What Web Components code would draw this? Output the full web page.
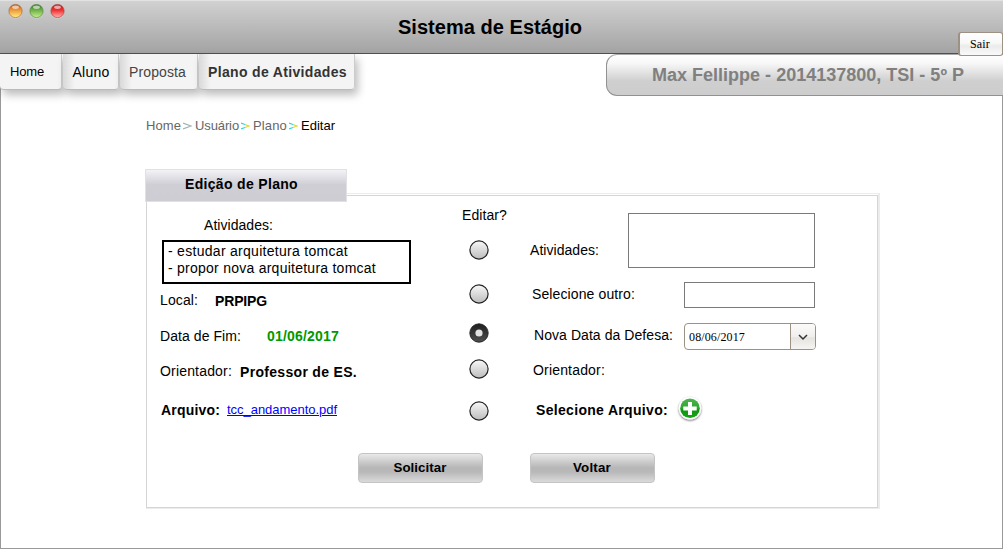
<!DOCTYPE html>
<html lang="pt-BR">
<head>
<meta charset="utf-8">
<title>Sistema de Estágio</title>
<style>
html,body{margin:0;background:#fff;font:14px/16px "Liberation Sans",Arial,sans-serif;color:#000;overflow:hidden}
</style>
</head>
<body>
<estagio-app></estagio-app>
<script>
const define = (name, html, ready) => customElements.define(name, class extends HTMLElement {
  constructor() {
    super();
    const t = document.createElement('template');
    t.innerHTML = html;
    this.attachShadow({mode: 'open'}).append(t.content.cloneNode(true));
  }
  connectedCallback() { if (ready) ready.call(this); }
});

/* One line of text; w is the width its letters are spaced out to. */
define('fit-text', `<style>
:host{display:block;flex:none;white-space:nowrap;line-height:16px}
span{display:inline-block;white-space:pre}
:host([link]) span{text-decoration:underline}
</style><span><slot></slot></span>`, function () {
  const w = +this.getAttribute('w'), span = this.shadowRoot.querySelector('span');
  if (!w) return;
  const text = this.shadowRoot.querySelector('slot').assignedNodes({flatten: true}).map(n => n.textContent).join('');
  const natural = span.getBoundingClientRect().width;
  if (text.length) span.style.letterSpacing = (w - natural) / text.length + 'px';
  this.style.width = w + 'px';
});

define('window-header', `<style>
:host{display:flex;box-sizing:border-box;height:54px;position:relative;border-top:1px solid #e2e2e2;border-bottom:1px solid #505050;background:linear-gradient(#d1d1d1,#a3a3a3)}
.lights{display:flex;gap:6px;padding:2px 0 0 8px;width:390px;height:16px}
svg{width:15px;height:16px}
fit-text{margin-top:15px;font:bold 20px/23px "Liberation Sans",Arial,sans-serif}
</style>
<div class="lights">
<svg viewBox="0 0 14 16"><defs><linearGradient id="a" x2="0" y2="1"><stop stop-color="#b95a2c"/><stop offset=".45" stop-color="#ef9b3c"/><stop offset="1" stop-color="#ffef85"/></linearGradient></defs><circle cx="7" cy="8.6" r="6.8" fill="#fff" opacity=".5"/><circle cx="7" cy="8" r="6.6" fill="url(#a)" stroke="#a0663a" stroke-width=".7"/><ellipse cx="7" cy="4.2" rx="3.4" ry="1.7" fill="#fff" opacity=".6"/></svg>
<svg viewBox="0 0 14 16"><defs><linearGradient id="b" x2="0" y2="1"><stop stop-color="#3f7430"/><stop offset=".45" stop-color="#70b34a"/><stop offset="1" stop-color="#c9f090"/></linearGradient></defs><circle cx="7" cy="8.6" r="6.8" fill="#fff" opacity=".5"/><circle cx="7" cy="8" r="6.6" fill="url(#b)" stroke="#55823f" stroke-width=".7"/><ellipse cx="7" cy="4.2" rx="3.4" ry="1.7" fill="#fff" opacity=".6"/></svg>
<svg viewBox="0 0 14 16"><defs><linearGradient id="c" x2="0" y2="1"><stop stop-color="#a81e20"/><stop offset=".45" stop-color="#ef3434"/><stop offset="1" stop-color="#ffb4b0"/></linearGradient></defs><circle cx="7" cy="8.6" r="6.8" fill="#fff" opacity=".5"/><circle cx="7" cy="8" r="6.6" fill="url(#c)" stroke="#a83c3a" stroke-width=".7"/><ellipse cx="7" cy="4.2" rx="3.4" ry="1.7" fill="#fff" opacity=".6"/></svg>
</div>
<fit-text w="184">Sistema de Estágio</fit-text>
<slot></slot>`);

define('exit-button', `<style>
:host{display:block;box-sizing:border-box;position:absolute;z-index:2;right:0;top:31px;width:45px;height:24px;border:1px solid #9d9184;border-left-width:2px;border-radius:3px;background:linear-gradient(#fff,#f8f8f8 45%,#ebebeb 60%,#fafafa);padding:3px 0 0 10px}
fit-text{font:12px/16px "Liberation Serif","Times New Roman",serif}
</style><fit-text w="20"><slot></slot></fit-text>`);

define('nav-tab', `<style>
:host{display:block;box-sizing:border-box;height:36px;padding-top:10px;background:linear-gradient(90deg,#d9d9d9,#f4f4f4 12px);border-radius:0 0 4px 4px;border-right:1px solid #ccc;border-bottom:1px solid #bbb;box-shadow:3px 5px 8px rgba(0,0,0,.26)}
:host([first]){background:#f4f4f4}
</style><slot></slot>`);

define('user-badge', `<style>
:host{display:block;box-sizing:border-box;margin-left:auto;width:397px;height:42px;border:1px solid #929292;border-top-color:#aaa;border-right:0;border-radius:11px 0 0 11px;background:linear-gradient(#fff,#f8f8f8 20%,#cfcfcf 65%,#cdcdcd);padding:10px 0 0 45px;color:#808080}
fit-text{font:bold 18px/21px "Liberation Sans",Arial,sans-serif}
</style><fit-text w="312"><slot></slot></fit-text>`);

define('bread-crumb', `<style>
:host{display:flex;font-size:13px;color:#666;margin:63px 0 0 146px;height:16px}
svg{width:9px;height:8px;margin:4px 3px 0 2px;fill:none;stroke-width:1.3}
</style>
<fit-text w="35">Home</fit-text>
<svg viewBox="0 0 9 8"><path d="M0 1l8 3-8 3" stroke="#a4b2b2"/></svg>
<fit-text w="44">Usuário</fit-text>
<svg viewBox="0 0 9 8"><path d="M0 1l4 1.5M0 7l4-1.5" stroke="#2ed6e6"/><path d="M4 2.5l4 1.5-4 1.5" stroke="#dcd92c"/></svg>
<fit-text w="34">Plano</fit-text>
<svg viewBox="0 0 9 8"><path d="M0 1l4 1.5M0 7l4-1.5" stroke="#2ed6e6"/><path d="M4 2.5l4 1.5-4 1.5" stroke="#dcd92c"/></svg>
<fit-text w="34" style="color:#000">Editar</fit-text>`);

define('radio-dot', `<style>
:host{display:block;height:20px;width:20px}svg{display:block}.on{display:none}:host([checked]) .on{display:block}:host([checked]) .off{display:none}
</style><svg width="20" height="20" viewBox="0 0 20 20"><defs><linearGradient id="g" x2="0" y2="1"><stop stop-color="#f8f8f8"/><stop offset="1" stop-color="#bcbcbc"/></linearGradient><linearGradient id="d" x2="0" y2="1"><stop stop-color="#1e1e1e"/><stop offset="1" stop-color="#505050"/></linearGradient></defs>
<circle class="off" cx="10" cy="10" r="9.1" fill="url(#g)" stroke="#222" stroke-width="1.2"/>
<g class="on"><circle cx="10" cy="10" r="9.2" fill="url(#d)" stroke="#222" stroke-width=".9"/><circle cx="10" cy="10" r="3.6" fill="#e2e2e2"/></g></svg>`);

define('text-box', `<style>:host{display:block;box-sizing:border-box;border:1px solid #7a7a7a;background:#fff}</style>`);

define('date-combo', `<style>
:host{display:flex;box-sizing:border-box;width:132px;height:27px;border:1px solid #9d9184;border-radius:4px;background:#fff;overflow:hidden}
fit-text{font:12px/16px "Liberation Serif","Times New Roman",serif;margin:5px 0 0 4px}
i{margin-left:auto;width:24px;border-left:1px solid #9d9184;background:linear-gradient(#fbfbfa,#f1efed 50%,#e6e3df 55%,#f5f4f2)}
svg{display:block;margin:10px 0 0 7px}
</style><fit-text w="56"><slot></slot></fit-text><i><svg width="10" height="7" viewBox="0 0 10 7"><path d="M1 1l4 4 4-4" fill="none" stroke="#333" stroke-width="1.5"/></svg></i>`);

define('add-button', `<style>:host{display:block;width:28px;height:28px}svg{display:block}</style>
<svg width="28" height="28" viewBox="0 0 28 28"><defs><linearGradient id="p" x2="0" y2="1"><stop stop-color="#4cb54c"/><stop offset=".5" stop-color="#2fa52f"/><stop offset=".55" stop-color="#119411"/><stop offset="1" stop-color="#15a515"/></linearGradient><filter id="s" x="-20%" y="-20%" width="150%" height="150%"><feDropShadow dx="0" dy="1" stdDeviation="1" flood-opacity=".6"/></filter></defs>
<circle cx="14" cy="13.3" r="11.2" fill="#fff" filter="url(#s)"/><circle cx="14" cy="13.3" r="9.8" fill="url(#p)"/><path d="M12 7h4v4.5h4.7v4H16V20h-4v-4.5H7.3v-4H12z" fill="#fff"/></svg>`);

define('push-button', `<style>
:host{display:flex;justify-content:center;box-sizing:border-box;width:125px;height:30px;border:1px solid #c4c4c4;border-radius:4px;background:linear-gradient(#e9e9e9,#cfcfcf 25%,#b6b6b6 50%,#b9b9b9 65%,#dadada);padding-top:6px;font-weight:bold;font-size:13.3px}
</style><slot></slot>`);

define('panel-title', `<style>
:host{display:block;box-sizing:border-box;width:202px;height:33px;border:1px solid #e0e0e5;background:linear-gradient(#f3f3f7,#cfced5 48%,#cecdd4);padding:6px 0 0 39px;font-weight:bold;position:relative;z-index:1}
</style><fit-text w="113"><slot></slot></fit-text>`);

define('edit-panel', `<style>
:host{display:block;margin:35px 0 0 145px}
.frame{box-sizing:border-box;margin:-9px 0 0 1px;width:734px;height:316px;border:solid #ececec;border-width:1px 2px 1px 0}
.body{box-sizing:border-box;height:313px;margin-top:1px;border:1px solid #d5d5d8;display:flex;flex-direction:column}
.cols{display:grid;grid-template-columns:315px 68px auto;height:257px}
.row{display:flex;align-items:flex-start}
.list{box-sizing:border-box;width:249px;height:44px;border:2px solid #000;padding:1px 4px;margin:7px 0 9px 15px}
.list fit-text{line-height:17px}
a{color:#00f}
.acts{display:flex;gap:47px;margin-left:210.5px}
</style>
<panel-title>Edição de Plano</panel-title>
<div class="frame"><div class="body">
<div class="cols">
 <div>
  <fit-text w="69" style="margin:21px 0 0 57px">Atividades:</fit-text>
  <div class="list"><fit-text w="180">- estudar arquitetura tomcat</fit-text><fit-text w="208">- propor nova arquitetura tomcat</fit-text></div>
  <div class="row" style="margin-left:13px;height:36px;margin-top:-1px"><fit-text w="38">Local:</fit-text><fit-text w="52" style="font-weight:bold;margin:1px 0 0 17px">PRPIPG</fit-text></div>
  <div class="row" style="margin-left:13px;height:35px"><fit-text w="81">Data de Fim:</fit-text><fit-text w="72" style="font-weight:bold;color:#090;margin-left:26px">01/06/2017</fit-text></div>
  <div class="row" style="margin-left:13px;height:39px"><fit-text w="72">Orientador:</fit-text><fit-text w="117" style="font-weight:bold;margin:1px 0 0 8px">Professor de ES.</fit-text></div>
  <div class="row" style="margin-left:14px"><fit-text w="59" style="font-weight:bold">Arquivo:</fit-text><a href="#" style="font-size:13px;margin:0 0 0 7px"><fit-text link w="110">tcc_andamento.pdf</fit-text></a></div>
 </div>
 <div>
  <fit-text w="45" style="margin-top:11px">Editar?</fit-text>
  <radio-dot style="margin:17px 0 0 7px"></radio-dot>
  <radio-dot style="margin:24px 0 0 7px"></radio-dot>
  <radio-dot checked style="margin:19px 0 0 7px"></radio-dot>
  <radio-dot style="margin:16px 0 0 7px"></radio-dot>
  <radio-dot style="margin:22px 0 0 7px"></radio-dot>
 </div>
 <div style="padding-top:17px">
  <div class="row" style="height:69px"><fit-text w="69" style="margin-top:29px">Atividades:</fit-text><text-box style="width:187px;height:55px;margin-left:29px"></text-box></div>
  <div class="row" style="height:41px;padding-left:1px"><fit-text w="103" style="margin:4px 0 0 1px">Selecione outro:</fit-text><text-box style="width:131px;height:26px;margin-left:49px"></text-box></div>
  <div class="row" style="height:39px;padding-left:4px"><fit-text w="139" style="margin-top:4px">Nova Data da Defesa:</fit-text><date-combo style="margin-left:11px">08/06/2017</date-combo></div>
  <div class="row" style="height:33px;padding-left:3px"><fit-text w="72">Orientador:</fit-text></div>
  <div class="row" style="padding-left:6px"><fit-text w="132" style="font-weight:bold;margin-top:7px">Selecione Arquivo:</fit-text><add-button style="margin-left:8px"></add-button></div>
 </div>
</div>
<div class="acts"><push-button><fit-text w="53">Solicitar</fit-text></push-button><push-button><fit-text w="38">Voltar</fit-text></push-button></div>
</div></div>`);

define('estagio-app', `<style>
:host{display:block;position:relative;box-sizing:border-box;width:1003px;height:549px;border:solid #999;border-width:0 1px 1px}
.page{margin:0 -1px}
.bar{display:flex;height:42px;position:relative}
nav{display:flex;gap:1px;height:36px}
bread-crumb{margin-top:22px}
</style><div class="page">
<window-header><exit-button>Sair</exit-button></window-header>
<div class="bar">
<nav>
<nav-tab first style="width:62px;padding-left:10px"><fit-text w="34" style="font-size:13px">Home</fit-text></nav-tab>
<nav-tab style="width:56px;padding-left:9.5px"><fit-text w="37">Aluno</fit-text></nav-tab>
<nav-tab style="width:78px;padding-left:9px"><fit-text w="57" style="color:#444">Proposta</fit-text></nav-tab>
<nav-tab style="width:156px;padding-left:9px"><fit-text w="139" style="font-weight:bold;color:#333">Plano de Atividades</fit-text></nav-tab>
</nav>
<user-badge>Max Fellippe - 2014137800, TSI - 5º P</user-badge>
</div>
<bread-crumb></bread-crumb>
<edit-panel></edit-panel>
</div>`);
</script>
</body>
</html>
